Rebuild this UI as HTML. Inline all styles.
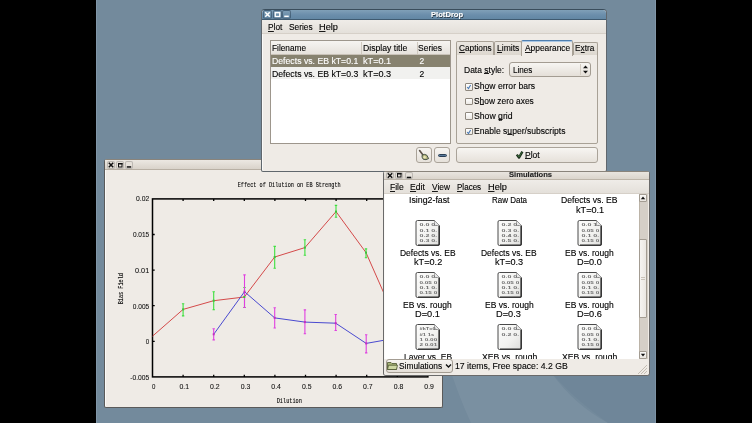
<!DOCTYPE html><html><head><meta charset="utf-8"><style>
html,body{margin:0;padding:0}
body{width:752px;height:423px;background:#000;position:relative;overflow:hidden;font-family:"Liberation Sans",sans-serif}
#root{position:absolute;left:0;top:0;width:752px;height:423px;will-change:transform}
.t{position:absolute;white-space:nowrap;line-height:12px;-webkit-text-stroke:0.12px currentColor}
.r{position:absolute;box-sizing:border-box}
u{text-decoration:none;background:linear-gradient(currentColor,currentColor) no-repeat;background-size:100% 0.9px;background-position:0 calc(100% - 0.6px)}
</style></head><body><div id="root">
<div class="r" style="left:96px;top:0px;width:560px;height:423px;background:#738a9c;box-shadow:inset 1px 0 0 #8196a8,inset -1px 0 0 #8196a8"></div>
<svg style="position:absolute;left:0;top:0" width="752" height="423"><path d="M447 360Q458 395 471 423H608Q575 405 553 375Q545 365 540 355Z" fill="#ffffff" opacity="0.055"/><path d="M540 355Q555 385 608 423H656V340Z" fill="#001030" opacity="0.03"/></svg><div class="r" style="left:104px;top:159px;width:339px;height:249px;background:#efebe6;border:1px solid #5a5a5a;border-top-color:#8a847b;border-radius:3px 3px 2px 2px;box-shadow:inset 1px 0 0 #fbfaf8"></div>
<div class="r" style="left:105px;top:160px;width:337px;height:10px;background:linear-gradient(#ece8e2,#d9d3ca);border-bottom:1px solid #b8b0a4"></div>
<div class="r" style="left:107px;top:161px;width:8px;height:8px;background:#e6e1da;border:1px solid rgba(0,0,0,0.18);border-radius:2px"></div>
<svg style="position:absolute;left:107px;top:161px" width="8" height="8"><path d="M1.7999999999999998 1.7999999999999998L6.2 6.2M6.2 1.7999999999999998L1.7999999999999998 6.2" stroke="#111" stroke-width="1.5"/></svg><div class="r" style="left:116px;top:161px;width:8px;height:8px;background:#e6e1da;border:1px solid rgba(0,0,0,0.18);border-radius:2px"></div>
<svg style="position:absolute;left:116px;top:161px" width="8" height="8"><rect x="2.5" y="2.5" width="3.5" height="3.5" fill="none" stroke="#111" stroke-width="1"/><rect x="2" y="2" width="4.5" height="1.5" fill="#111"/></svg><div class="r" style="left:125px;top:161px;width:8px;height:8px;background:#e6e1da;border:1px solid rgba(0,0,0,0.18);border-radius:2px"></div>
<svg style="position:absolute;left:125px;top:161px" width="8" height="8"><rect x="1.7999999999999998" y="5.2" width="4.4" height="1.5" fill="#111"/></svg><svg style="position:absolute;left:0;top:0" width="752" height="423" viewBox="0 0 752 423"><g font-family="Liberation Sans" font-size="7" fill="#111" stroke="#111" stroke-width="0.08"><rect x="152.5" y="198.9" width="275.40000000000003" height="178.00000000000003" fill="none" stroke="#000" stroke-width="1.5"/><path d="M183.1 198.9v2.2M183.1 376.9v-2.2M213.7 198.9v2.2M213.7 376.9v-2.2M244.3 198.9v2.2M244.3 376.9v-2.2M274.9 198.9v2.2M274.9 376.9v-2.2M305.5 198.9v2.2M305.5 376.9v-2.2M336.1 198.9v2.2M336.1 376.9v-2.2M366.7 198.9v2.2M366.7 376.9v-2.2M397.3 198.9v2.2M397.3 376.9v-2.2M152.5 234.5h2.2M427.9 234.5h-2.2M152.5 270.1h2.2M427.9 270.1h-2.2M152.5 305.7h2.2M427.9 305.7h-2.2M152.5 341.3h2.2M427.9 341.3h-2.2" stroke="#000" stroke-width="1.3"/><text x="136.0" y="201.1" textLength="13.2" lengthAdjust="spacingAndGlyphs">0.02</text><text x="132.9" y="236.9" textLength="16.3" lengthAdjust="spacingAndGlyphs">0.015</text><text x="135.0" y="272.5" textLength="14.2" lengthAdjust="spacingAndGlyphs">0.01</text><text x="132.8" y="308.5" textLength="16.4" lengthAdjust="spacingAndGlyphs">0.005</text><text x="145.8" y="344.1" textLength="3.4" lengthAdjust="spacingAndGlyphs">0</text><text x="130.2" y="379.8" textLength="19.0" lengthAdjust="spacingAndGlyphs">-0.005</text><text x="152.0" y="389.3" textLength="3.4" lengthAdjust="spacingAndGlyphs">0</text><text x="179.5" y="389.3" textLength="9.6" lengthAdjust="spacingAndGlyphs">0.1</text><text x="210.1" y="389.3" textLength="9.6" lengthAdjust="spacingAndGlyphs">0.2</text><text x="240.7" y="389.3" textLength="9.6" lengthAdjust="spacingAndGlyphs">0.3</text><text x="271.3" y="389.3" textLength="9.6" lengthAdjust="spacingAndGlyphs">0.4</text><text x="301.9" y="389.3" textLength="9.6" lengthAdjust="spacingAndGlyphs">0.5</text><text x="332.5" y="389.3" textLength="9.6" lengthAdjust="spacingAndGlyphs">0.6</text><text x="363.1" y="389.3" textLength="9.6" lengthAdjust="spacingAndGlyphs">0.7</text><text x="393.7" y="389.3" textLength="9.6" lengthAdjust="spacingAndGlyphs">0.8</text><text x="424.3" y="389.3" textLength="9.6" lengthAdjust="spacingAndGlyphs">0.9</text><g font-family="Liberation Mono" font-size="7.6" fill="#000" stroke="#000" stroke-width="0.12"><text x="237.7" y="187.0" textLength="103" lengthAdjust="spacingAndGlyphs">Effect of Dilution on EB Strength</text><text x="276.7" y="402.7" textLength="25.2" lengthAdjust="spacingAndGlyphs">Dilution</text><text transform="translate(123.3,304.3) rotate(-90)" x="0" y="0" textLength="31.3" lengthAdjust="spacingAndGlyphs">Bias Field</text></g></g><polyline points="152.5,336.2 183.1,309.4 213.7,300.7 244.3,297.0 274.7,257.0 304.9,247.6 336.0,211.6 366.0,252.6 396.6,322.0 427.5,330.0" fill="none" stroke="#d44a4a" stroke-width="1"/><path d="M183.1 303.2V316.4M181.9 303.7h2.4M181.9 315.9h2.4M213.7 291.2V310.3M212.5 291.7h2.4M212.5 309.8h2.4M244.5 287.0V308.0M243.3 287.5h2.4M243.3 307.5h2.4M274.7 245.9V268.7M273.5 246.4h2.4M273.5 268.2h2.4M304.9 239.2V255.8M303.7 239.7h2.4M303.7 255.3h2.4M336.0 204.9V217.8M334.8 205.4h2.4M334.8 217.3h2.4M366.0 248.4V258.3M364.8 248.9h2.4M364.8 257.8h2.4" stroke="#3ee03e" stroke-width="1.1" fill="none"/><polyline points="213.7,334.3 244.5,291.7 274.7,317.9 304.9,322.1 335.7,323.2 366.2,343.4 396.8,338.0 427.5,335.0" fill="none" stroke="#4a4ad0" stroke-width="1"/><path d="M213.7 328.3V340.4M212.5 328.8h2.4M212.5 339.9h2.4M244.5 274.4V308.0M243.3 274.9h2.4M243.3 307.5h2.4M274.7 307.2V328.5M273.5 307.7h2.4M273.5 328.0h2.4M304.9 309.4V334.3M303.7 309.9h2.4M303.7 333.8h2.4M335.7 314.0V331.0M334.5 314.5h2.4M334.5 330.5h2.4M366.2 334.3V353.4M365.0 334.8h2.4M365.0 352.9h2.4" stroke="#e040e0" stroke-width="1.1" fill="none"/><g fill="#3ec03e"><rect x="182.1" y="308.4" width="2" height="2"/><rect x="212.7" y="299.7" width="2" height="2"/><rect x="243.3" y="296.0" width="2" height="2"/><rect x="273.7" y="256.0" width="2" height="2"/><rect x="303.9" y="246.6" width="2" height="2"/><rect x="335.0" y="210.6" width="2" height="2"/><rect x="365.0" y="251.6" width="2" height="2"/></g><g fill="#c030c0"><rect x="212.7" y="333.3" width="2" height="2"/><rect x="243.5" y="290.7" width="2" height="2"/><rect x="273.7" y="316.9" width="2" height="2"/><rect x="303.9" y="321.1" width="2" height="2"/><rect x="334.7" y="322.2" width="2" height="2"/><rect x="365.2" y="342.4" width="2" height="2"/></g></svg>
<div class="r" style="left:261px;top:9px;width:346px;height:163px;background:#efebe6;border:1px solid #60676d;border-top-color:#3a4d5c;border-radius:4px 4px 2px 2px;box-shadow:inset 1px 0 0 #fbfaf8"></div>
<div class="r" style="left:262px;top:10px;width:344px;height:10px;background:linear-gradient(#80a0b8,#6b8eab 55%,#6388a5);border-bottom:1px solid #3f5a70;border-radius:3px 3px 0 0"></div>
<div class="r" style="left:263px;top:10px;width:9px;height:9px;background:linear-gradient(#7d9db6,#5f84a1);border:1px solid rgba(30,50,70,0.45);border-radius:2px"></div>
<svg style="position:absolute;left:263px;top:10px" width="9" height="9"><path d="M2.25 2.25L6.75 6.75M6.75 2.25L2.25 6.75" stroke="#fff" stroke-width="1.5"/></svg><div class="r" style="left:273px;top:10px;width:9px;height:9px;background:linear-gradient(#7d9db6,#5f84a1);border:1px solid rgba(30,50,70,0.45);border-radius:2px"></div>
<svg style="position:absolute;left:273px;top:10px" width="9" height="9"><rect x="2.25" y="2.6999999999999997" width="4.5" height="3.78" fill="none" stroke="#fff" stroke-width="1.3"/></svg><div class="r" style="left:282px;top:10px;width:9px;height:9px;background:linear-gradient(#7d9db6,#5f84a1);border:1px solid rgba(30,50,70,0.45);border-radius:2px"></div>
<svg style="position:absolute;left:282px;top:10px" width="9" height="9"><rect x="2.25" y="5.58" width="4.5" height="1.5" fill="#fff"/></svg><div class="t" style="left:431.40px;top:9.14px;font-size:7.4px;color:#fff;font-weight:bold;transform:scaleX(1.0312);transform-origin:0 0;text-shadow:0.6px 0.6px 0 #2a3a48">PlotDrop</div>
<div class="r" style="left:262px;top:20px;width:344px;height:14px;background:linear-gradient(#efece8,#e4e0da);border-bottom:1px solid #d6d0c8"></div>
<div class="t" style="left:267.73px;top:21.05px;font-size:8.5px;color:#000;font-weight:normal;transform:scaleX(0.9786);transform-origin:0 0;"><u>P</u>lot</div>
<div class="t" style="left:288.92px;top:21.05px;font-size:8.5px;color:#000;font-weight:normal;transform:scaleX(0.9822);transform-origin:0 0;">Series</div>
<div class="t" style="left:319.46px;top:21.05px;font-size:8.5px;color:#000;font-weight:normal;transform:scaleX(1.0822);transform-origin:0 0;"><u>H</u>elp</div>
<div class="r" style="left:270px;top:40px;width:181px;height:104px;background:#fff;border:1px solid #9d968c"></div>
<div class="r" style="left:271px;top:41px;width:179px;height:14px;background:linear-gradient(#f6f4f1,#e6e2dc);border-bottom:1px solid #c9c2b8"></div>
<div class="r" style="left:361px;top:42px;width:1px;height:12px;background:#cfc8be"></div>
<div class="r" style="left:417px;top:42px;width:1px;height:12px;background:#cfc8be"></div>
<div class="t" style="left:271.94px;top:42.35px;font-size:8.5px;color:#000;font-weight:normal;transform:scaleX(0.9730);transform-origin:0 0;">Filename</div>
<div class="t" style="left:362.61px;top:42.35px;font-size:8.5px;color:#000;font-weight:normal;transform:scaleX(1.0185);transform-origin:0 0;">Display title</div>
<div class="t" style="left:418.42px;top:42.35px;font-size:8.5px;color:#000;font-weight:normal;transform:scaleX(0.9993);transform-origin:0 0;">Series</div>
<div class="r" style="left:271px;top:55px;width:179px;height:12px;background:#87826f"></div>
<div class="r" style="left:271px;top:67px;width:179px;height:12px;background:#f1f1ef"></div>
<div class="t" style="left:271.90px;top:55.45px;font-size:8.5px;color:#fff;font-weight:normal;transform:scaleX(1.0233);transform-origin:0 0;">Defects vs. EB kT=0.1</div>
<div class="t" style="left:363.01px;top:55.45px;font-size:8.5px;color:#fff;font-weight:normal;transform:scaleX(1.0756);transform-origin:0 0;">kT=0.1</div>
<div class="t" style="left:419.60px;top:55.45px;font-size:8.5px;color:#fff;font-weight:normal;">2</div>
<div class="t" style="left:271.90px;top:67.65px;font-size:8.5px;color:#000;font-weight:normal;transform:scaleX(1.0228);transform-origin:0 0;">Defects vs. EB kT=0.3</div>
<div class="t" style="left:363.01px;top:67.65px;font-size:8.5px;color:#000;font-weight:normal;transform:scaleX(1.0738);transform-origin:0 0;">kT=0.3</div>
<div class="t" style="left:419.60px;top:67.65px;font-size:8.5px;color:#000;font-weight:normal;">2</div>
<div class="r" style="left:416px;top:147px;width:16px;height:16px;background:linear-gradient(#f7f5f2,#e6e1da);border:1px solid #aaa399;border-radius:3px"></div>
<div class="r" style="left:434px;top:147px;width:16px;height:16px;background:linear-gradient(#f7f5f2,#e6e1da);border:1px solid #aaa399;border-radius:3px"></div>
<svg style="position:absolute;left:416px;top:147px" width="16" height="16"><path d="M3.6 3.6L7 8" stroke="#5e544c" stroke-width="1.7" stroke-linecap="round"/><path d="M6 8.3Q8.5 6.5 10.8 8.2L12.6 11.6Q10 13.4 7.2 12.2Q5.6 10.2 6 8.3Z" fill="#b9b883" stroke="#34443a" stroke-width="0.9"/><circle cx="8.6" cy="10.3" r="1.2" fill="#e8e6b8"/></svg><div class="r" style="left:438px;top:153.5px;width:8.5px;height:3.0px;background:#5a7a9a;border:0.8px solid #2a3f55;border-radius:1.5px"></div>
<div class="r" style="left:456px;top:54px;width:142px;height:90px;background:#efebe6;border:1px solid #a8a196;border-radius:0 0 2px 2px"></div>
<div class="r" style="left:456px;top:41px;width:38px;height:14px;background:linear-gradient(#ebe7e1,#dcd7cf);border:1px solid #a8a196;border-bottom:none;border-radius:2px 2px 0 0"></div>
<div class="r" style="left:494px;top:41px;width:28px;height:14px;background:linear-gradient(#ebe7e1,#dcd7cf);border:1px solid #a8a196;border-bottom:none;border-radius:2px 2px 0 0"></div>
<div class="r" style="left:573px;top:42px;width:25px;height:13px;background:linear-gradient(#ebe7e1,#dcd7cf);border:1px solid #a8a196;border-bottom:none;border-radius:2px 2px 0 0"></div>
<div class="r" style="left:521px;top:40px;width:52px;height:16px;background:#efebe6;border:1px solid #a8a196;border-bottom:none;border-top:1px solid #4f7fb0;box-shadow:inset 0 1px 0 #a9c6e3;border-radius:2px 2px 0 0"></div>
<div class="t" style="left:459.29px;top:42.05px;font-size:8.5px;color:#000;font-weight:normal;transform:scaleX(0.9723);transform-origin:0 0;"><u>C</u>aptions</div>
<div class="t" style="left:497.02px;top:42.05px;font-size:8.5px;color:#000;font-weight:normal;transform:scaleX(1.0044);transform-origin:0 0;"><u>L</u>imits</div>
<div class="t" style="left:524.80px;top:42.05px;font-size:8.5px;color:#000;font-weight:normal;transform:scaleX(0.9852);transform-origin:0 0;"><u>A</u>ppearance</div>
<div class="t" style="left:574.94px;top:42.35px;font-size:8.5px;color:#000;font-weight:normal;transform:scaleX(0.9704);transform-origin:0 0;">E<u>x</u>tra</div>
<div class="t" style="left:463.52px;top:63.75px;font-size:8.5px;color:#000;font-weight:normal;transform:scaleX(0.9995);transform-origin:0 0;">Data <u>s</u>tyle:</div>
<div class="r" style="left:509px;top:62px;width:82px;height:15px;background:linear-gradient(#f7f5f2,#e4dfd8);border:1px solid #a39c92;border-radius:3px"></div>
<div class="r" style="left:580px;top:64px;width:1px;height:11px;background:#d3ccc2"></div>
<div class="t" style="left:512.85px;top:63.75px;font-size:8.5px;color:#000;font-weight:normal;transform:scaleX(0.9567);transform-origin:0 0;">Lines</div>
<svg style="position:absolute;left:582px;top:64px" width="7" height="11"><path d="M1 4.2L3.5 1.5L6 4.2zM1 6.8L3.5 9.5L6 6.8z" fill="#111"/></svg><div class="r" style="left:465px;top:83px;width:7.5px;height:7.5px;background:linear-gradient(#fff,#ece9e4);border:1px solid #8f887e;border-radius:1px"></div>
<svg style="position:absolute;left:465px;top:83px" width="8" height="8"><path d="M2.2 4L3.5 5.6L5.6 2" stroke="#4a7ab5" stroke-width="1.1" fill="none"/></svg><div class="t" style="left:473.91px;top:80.35px;font-size:8.5px;color:#000;font-weight:normal;transform:scaleX(1.0101);transform-origin:0 0;">Sh<u>o</u>w error bars</div>
<div class="r" style="left:465px;top:97.6px;width:7.5px;height:7.5px;background:linear-gradient(#fff,#ece9e4);border:1px solid #8f887e;border-radius:1px"></div>
<div class="t" style="left:473.92px;top:94.95px;font-size:8.5px;color:#000;font-weight:normal;transform:scaleX(0.9883);transform-origin:0 0;">S<u>h</u>ow zero axes</div>
<div class="r" style="left:465px;top:112.2px;width:7.5px;height:7.5px;background:linear-gradient(#fff,#ece9e4);border:1px solid #8f887e;border-radius:1px"></div>
<div class="t" style="left:473.91px;top:109.55px;font-size:8.5px;color:#000;font-weight:normal;transform:scaleX(1.0192);transform-origin:0 0;">Show <u>g</u>rid</div>
<div class="r" style="left:465px;top:127.5px;width:7.5px;height:7.5px;background:linear-gradient(#fff,#ece9e4);border:1px solid #8f887e;border-radius:1px"></div>
<svg style="position:absolute;left:465px;top:127.5px" width="8" height="8"><path d="M2.2 4L3.5 5.6L5.6 2" stroke="#4a7ab5" stroke-width="1.1" fill="none"/></svg><div class="t" style="left:473.61px;top:124.85px;font-size:8.5px;color:#000;font-weight:normal;transform:scaleX(1.0082);transform-origin:0 0;">Enable s<u>u</u>per/subscripts</div>
<div class="r" style="left:456px;top:147px;width:142px;height:16px;background:linear-gradient(#f7f5f2,#e6e1da);border:1px solid #aaa399;border-radius:3px"></div>
<svg style="position:absolute;left:515px;top:150px" width="9" height="10"><path d="M1.8 4.6L4 7.6L7.4 1.6" stroke="#1c2e1c" stroke-width="2.4" fill="none" stroke-linejoin="round"/><path d="M2.4 4.9L4 7L6.9 2.2" stroke="#3f7a3f" stroke-width="0.8" fill="none"/></svg><div class="t" style="left:525.22px;top:148.55px;font-size:8.5px;color:#000;font-weight:normal;transform:scaleX(1.0002);transform-origin:0 0;"><u>P</u>lot</div>
<div class="r" style="left:383px;top:171px;width:267px;height:205px;background:#efebe6;border:1px solid #6a6a6a;border-top-color:#8a847b;border-radius:3px 3px 3px 3px;box-shadow:inset 1px 0 0 #fbfaf8"></div>
<div class="r" style="left:384px;top:172px;width:265px;height:8px;background:linear-gradient(#e9e5df,#dbd5cc);border-bottom:1px solid #bdb5a9"></div>
<div class="r" style="left:386px;top:172px;width:8px;height:7px;background:#e6e1da;border:1px solid rgba(0,0,0,0.18);border-radius:2px"></div>
<svg style="position:absolute;left:386px;top:172px" width="8" height="7"><path d="M1.7999999999999998 1.2999999999999998L6.2 5.7M6.2 1.2999999999999998L1.7999999999999998 5.7" stroke="#111" stroke-width="1.5"/></svg><div class="r" style="left:395px;top:172px;width:8px;height:7px;background:#e6e1da;border:1px solid rgba(0,0,0,0.18);border-radius:2px"></div>
<svg style="position:absolute;left:395px;top:172px" width="8" height="7"><rect x="2.5" y="1.5" width="3.5" height="3.5" fill="none" stroke="#111" stroke-width="1"/><rect x="2" y="1" width="4.5" height="1.5" fill="#111"/></svg><div class="r" style="left:405px;top:172px;width:8px;height:7px;background:#e6e1da;border:1px solid rgba(0,0,0,0.18);border-radius:2px"></div>
<svg style="position:absolute;left:405px;top:172px" width="8" height="7"><rect x="1.7999999999999998" y="4.7" width="4.4" height="1.5" fill="#111"/></svg><div class="t" style="left:508.97px;top:169.11px;font-size:7.2px;color:#222;font-weight:bold;transform:scaleX(1.0575);transform-origin:0 0;">Simulations</div>
<div class="r" style="left:384px;top:180px;width:265px;height:14px;background:linear-gradient(#efece8,#e4e0da);border-bottom:1px solid #d6d0c8"></div>
<div class="t" style="left:389.92px;top:181.05px;font-size:8.5px;color:#000;font-weight:normal;transform:scaleX(1.0028);transform-origin:0 0;"><u>F</u>ile</div>
<div class="t" style="left:409.91px;top:181.05px;font-size:8.5px;color:#000;font-weight:normal;transform:scaleX(1.0074);transform-origin:0 0;"><u>E</u>dit</div>
<div class="t" style="left:431.86px;top:181.05px;font-size:8.5px;color:#000;font-weight:normal;transform:scaleX(0.9818);transform-origin:0 0;"><u>V</u>iew</div>
<div class="t" style="left:457.36px;top:181.05px;font-size:8.5px;color:#000;font-weight:normal;transform:scaleX(0.9461);transform-origin:0 0;"><u>P</u>laces</div>
<div class="t" style="left:488.26px;top:181.05px;font-size:8.5px;color:#000;font-weight:normal;transform:scaleX(1.0822);transform-origin:0 0;"><u>H</u>elp</div>
<div class="r" style="left:385px;top:194px;width:254px;height:165px;background:#fff"></div>
<svg width="0" height="0" style="position:absolute"><defs><linearGradient id="ig" x1="0" y1="0" x2="1" y2="1"><stop offset="0" stop-color="#fdfdfc"/><stop offset="0.6" stop-color="#f1f1ef"/><stop offset="1" stop-color="#dcdcda"/></linearGradient></defs></svg><div class="t" style="left:408.71px;top:194.25px;font-size:8.5px;color:#000;font-weight:normal;transform:scaleX(1.0345);transform-origin:0 0;">Ising2-fast</div>
<div class="t" style="left:491.96px;top:194.25px;font-size:8.5px;color:#000;font-weight:normal;transform:scaleX(0.9390);transform-origin:0 0;">Raw Data</div>
<div class="t" style="left:560.91px;top:194.25px;font-size:8.5px;color:#000;font-weight:normal;transform:scaleX(1.0144);transform-origin:0 0;">Defects vs. EB</div>
<div class="t" style="left:576.21px;top:203.65px;font-size:8.5px;color:#000;font-weight:normal;transform:scaleX(1.0756);transform-origin:0 0;">kT=0.1</div>
<div class="r" style="left:574px;top:194px;width:30px;height:2px;background:#fff"></div>
<svg style="position:absolute;left:415.3px;top:219px" width="26" height="28"><path d="M2.5 1.5H19.5L24.5 6.5V25Q24.5 26.5 23 26.5H2.5Q1 26.5 1 25V3Q1 1.5 2.5 1.5Z" fill="url(#ig)" stroke="#4a4a4a" stroke-width="1"/><path d="M19.5 1.5V6.5H24.5" fill="#e8e8e8" stroke="#777" stroke-width="0.6"/><path d="M24 7V25.5Q24 26 23.5 26H3" stroke="#2a2a2a" stroke-width="1.2" fill="none"/><g font-family="Liberation Sans" font-weight="bold" font-size="3.8" fill="#6a6a6a"><text x="4.5" y="7.4" textLength="17.7" lengthAdjust="spacingAndGlyphs">0.0 0.</text><text x="4.5" y="12.6" textLength="17.7" lengthAdjust="spacingAndGlyphs">0.1 0.</text><text x="4.5" y="17.8" textLength="17.7" lengthAdjust="spacingAndGlyphs">0.2 0.</text><text x="4.5" y="23.0" textLength="17.7" lengthAdjust="spacingAndGlyphs">0.3 0.</text></g></svg><div class="t" style="left:399.92px;top:246.85px;font-size:8.5px;color:#000;font-weight:normal;transform:scaleX(0.9961);transform-origin:0 0;">Defects vs. EB</div>
<div class="t" style="left:413.60px;top:255.95px;font-size:8.5px;color:#000;font-weight:normal;transform:scaleX(1.0774);transform-origin:0 0;">kT=0.2</div>
<svg style="position:absolute;left:496.5px;top:219px" width="26" height="28"><path d="M2.5 1.5H19.5L24.5 6.5V25Q24.5 26.5 23 26.5H2.5Q1 26.5 1 25V3Q1 1.5 2.5 1.5Z" fill="url(#ig)" stroke="#4a4a4a" stroke-width="1"/><path d="M19.5 1.5V6.5H24.5" fill="#e8e8e8" stroke="#777" stroke-width="0.6"/><path d="M24 7V25.5Q24 26 23.5 26H3" stroke="#2a2a2a" stroke-width="1.2" fill="none"/><g font-family="Liberation Sans" font-weight="bold" font-size="3.8" fill="#6a6a6a"><text x="4.5" y="7.4" textLength="17.7" lengthAdjust="spacingAndGlyphs">0.2 0.</text><text x="4.5" y="12.6" textLength="17.7" lengthAdjust="spacingAndGlyphs">0.3 0.</text><text x="4.5" y="17.8" textLength="17.7" lengthAdjust="spacingAndGlyphs">0.4 0.</text><text x="4.5" y="23.0" textLength="17.7" lengthAdjust="spacingAndGlyphs">0.5 0.</text></g></svg><div class="t" style="left:481.12px;top:246.85px;font-size:8.5px;color:#000;font-weight:normal;transform:scaleX(0.9961);transform-origin:0 0;">Defects vs. EB</div>
<div class="t" style="left:494.81px;top:255.95px;font-size:8.5px;color:#000;font-weight:normal;transform:scaleX(1.0738);transform-origin:0 0;">kT=0.3</div>
<svg style="position:absolute;left:577.0px;top:219px" width="26" height="28"><path d="M2.5 1.5H19.5L24.5 6.5V25Q24.5 26.5 23 26.5H2.5Q1 26.5 1 25V3Q1 1.5 2.5 1.5Z" fill="url(#ig)" stroke="#4a4a4a" stroke-width="1"/><path d="M19.5 1.5V6.5H24.5" fill="#e8e8e8" stroke="#777" stroke-width="0.6"/><path d="M24 7V25.5Q24 26 23.5 26H3" stroke="#2a2a2a" stroke-width="1.2" fill="none"/><g font-family="Liberation Sans" font-weight="bold" font-size="3.8" fill="#6a6a6a"><text x="4.5" y="7.4" textLength="17.7" lengthAdjust="spacingAndGlyphs">0.0 1.</text><text x="4.5" y="12.6" textLength="17.7" lengthAdjust="spacingAndGlyphs">0.05 0</text><text x="4.5" y="17.8" textLength="17.7" lengthAdjust="spacingAndGlyphs">0.1 0.</text><text x="4.5" y="23.0" textLength="17.7" lengthAdjust="spacingAndGlyphs">0.15 0</text></g></svg><div class="t" style="left:565.07px;top:246.85px;font-size:8.5px;color:#000;font-weight:normal;transform:scaleX(1.0006);transform-origin:0 0;">EB vs. rough</div>
<div class="t" style="left:576.92px;top:255.95px;font-size:8.5px;color:#000;font-weight:normal;transform:scaleX(1.0807);transform-origin:0 0;">D=0.0</div>
<svg style="position:absolute;left:415.3px;top:271px" width="26" height="28"><path d="M2.5 1.5H19.5L24.5 6.5V25Q24.5 26.5 23 26.5H2.5Q1 26.5 1 25V3Q1 1.5 2.5 1.5Z" fill="url(#ig)" stroke="#4a4a4a" stroke-width="1"/><path d="M19.5 1.5V6.5H24.5" fill="#e8e8e8" stroke="#777" stroke-width="0.6"/><path d="M24 7V25.5Q24 26 23.5 26H3" stroke="#2a2a2a" stroke-width="1.2" fill="none"/><g font-family="Liberation Sans" font-weight="bold" font-size="3.8" fill="#6a6a6a"><text x="4.5" y="7.4" textLength="17.7" lengthAdjust="spacingAndGlyphs">0.0 0.</text><text x="4.5" y="12.6" textLength="17.7" lengthAdjust="spacingAndGlyphs">0.05 0</text><text x="4.5" y="17.8" textLength="17.7" lengthAdjust="spacingAndGlyphs">0.1 0.</text><text x="4.5" y="23.0" textLength="17.7" lengthAdjust="spacingAndGlyphs">0.15 0</text></g></svg><div class="t" style="left:403.37px;top:298.85px;font-size:8.5px;color:#000;font-weight:normal;transform:scaleX(1.0006);transform-origin:0 0;">EB vs. rough</div>
<div class="t" style="left:415.21px;top:307.95px;font-size:8.5px;color:#000;font-weight:normal;transform:scaleX(1.0849);transform-origin:0 0;">D=0.1</div>
<svg style="position:absolute;left:496.5px;top:271px" width="26" height="28"><path d="M2.5 1.5H19.5L24.5 6.5V25Q24.5 26.5 23 26.5H2.5Q1 26.5 1 25V3Q1 1.5 2.5 1.5Z" fill="url(#ig)" stroke="#4a4a4a" stroke-width="1"/><path d="M19.5 1.5V6.5H24.5" fill="#e8e8e8" stroke="#777" stroke-width="0.6"/><path d="M24 7V25.5Q24 26 23.5 26H3" stroke="#2a2a2a" stroke-width="1.2" fill="none"/><g font-family="Liberation Sans" font-weight="bold" font-size="3.8" fill="#6a6a6a"><text x="4.5" y="7.4" textLength="17.7" lengthAdjust="spacingAndGlyphs">0.0 0.</text><text x="4.5" y="12.6" textLength="17.7" lengthAdjust="spacingAndGlyphs">0.05 0</text><text x="4.5" y="17.8" textLength="17.7" lengthAdjust="spacingAndGlyphs">0.1 0.</text><text x="4.5" y="23.0" textLength="17.7" lengthAdjust="spacingAndGlyphs">0.15 0</text></g></svg><div class="t" style="left:484.57px;top:298.85px;font-size:8.5px;color:#000;font-weight:normal;transform:scaleX(1.0006);transform-origin:0 0;">EB vs. rough</div>
<div class="t" style="left:496.41px;top:307.95px;font-size:8.5px;color:#000;font-weight:normal;transform:scaleX(1.0828);transform-origin:0 0;">D=0.3</div>
<svg style="position:absolute;left:577.0px;top:271px" width="26" height="28"><path d="M2.5 1.5H19.5L24.5 6.5V25Q24.5 26.5 23 26.5H2.5Q1 26.5 1 25V3Q1 1.5 2.5 1.5Z" fill="url(#ig)" stroke="#4a4a4a" stroke-width="1"/><path d="M19.5 1.5V6.5H24.5" fill="#e8e8e8" stroke="#777" stroke-width="0.6"/><path d="M24 7V25.5Q24 26 23.5 26H3" stroke="#2a2a2a" stroke-width="1.2" fill="none"/><g font-family="Liberation Sans" font-weight="bold" font-size="3.8" fill="#6a6a6a"><text x="4.5" y="7.4" textLength="17.7" lengthAdjust="spacingAndGlyphs">0.0 0.</text><text x="4.5" y="12.6" textLength="17.7" lengthAdjust="spacingAndGlyphs">0.05 0</text><text x="4.5" y="17.8" textLength="17.7" lengthAdjust="spacingAndGlyphs">0.1 0.</text><text x="4.5" y="23.0" textLength="17.7" lengthAdjust="spacingAndGlyphs">0.15 0</text></g></svg><div class="t" style="left:565.07px;top:298.85px;font-size:8.5px;color:#000;font-weight:normal;transform:scaleX(1.0006);transform-origin:0 0;">EB vs. rough</div>
<div class="t" style="left:576.91px;top:307.95px;font-size:8.5px;color:#000;font-weight:normal;transform:scaleX(1.0828);transform-origin:0 0;">D=0.6</div>
<svg style="position:absolute;left:415.3px;top:323px" width="26" height="28"><path d="M2.5 1.5H19.5L24.5 6.5V25Q24.5 26.5 23 26.5H2.5Q1 26.5 1 25V3Q1 1.5 2.5 1.5Z" fill="url(#ig)" stroke="#4a4a4a" stroke-width="1"/><path d="M19.5 1.5V6.5H24.5" fill="#e8e8e8" stroke="#777" stroke-width="0.6"/><path d="M24 7V25.5Q24 26 23.5 26H3" stroke="#2a2a2a" stroke-width="1.2" fill="none"/><g font-family="Liberation Sans" font-weight="bold" font-size="3.8" fill="#6a6a6a"><text x="4.5" y="7.4" textLength="17.7" lengthAdjust="spacingAndGlyphs">#kT=0.</text><text x="4.5" y="12.6" textLength="14.8" lengthAdjust="spacingAndGlyphs">#1 1s</text><text x="4.5" y="17.8" textLength="17.7" lengthAdjust="spacingAndGlyphs">1 0.00</text><text x="4.5" y="23.0" textLength="17.7" lengthAdjust="spacingAndGlyphs">2 0.01</text></g></svg><div class="t" style="left:403.67px;top:350.85px;font-size:8.5px;color:#000;font-weight:normal;transform:scaleX(0.9969);transform-origin:0 0;">Layer vs. EB</div>
<svg style="position:absolute;left:496.5px;top:323px" width="26" height="28"><path d="M2.5 1.5H19.5L24.5 6.5V25Q24.5 26.5 23 26.5H2.5Q1 26.5 1 25V3Q1 1.5 2.5 1.5Z" fill="url(#ig)" stroke="#4a4a4a" stroke-width="1"/><path d="M19.5 1.5V6.5H24.5" fill="#e8e8e8" stroke="#777" stroke-width="0.6"/><path d="M24 7V25.5Q24 26 23.5 26H3" stroke="#2a2a2a" stroke-width="1.2" fill="none"/><g font-family="Liberation Sans" font-weight="bold" font-size="3.8" fill="#6a6a6a"><text x="4.5" y="7.4" textLength="17.7" lengthAdjust="spacingAndGlyphs">0.0 0.</text><text x="4.5" y="12.6" textLength="17.7" lengthAdjust="spacingAndGlyphs">0.2 0.</text></g></svg><div class="t" style="left:481.53px;top:350.85px;font-size:8.5px;color:#000;font-weight:normal;transform:scaleX(1.0169);transform-origin:0 0;">XEB vs. rough</div>
<svg style="position:absolute;left:577.0px;top:323px" width="26" height="28"><path d="M2.5 1.5H19.5L24.5 6.5V25Q24.5 26.5 23 26.5H2.5Q1 26.5 1 25V3Q1 1.5 2.5 1.5Z" fill="url(#ig)" stroke="#4a4a4a" stroke-width="1"/><path d="M19.5 1.5V6.5H24.5" fill="#e8e8e8" stroke="#777" stroke-width="0.6"/><path d="M24 7V25.5Q24 26 23.5 26H3" stroke="#2a2a2a" stroke-width="1.2" fill="none"/><g font-family="Liberation Sans" font-weight="bold" font-size="3.8" fill="#6a6a6a"><text x="4.5" y="7.4" textLength="17.7" lengthAdjust="spacingAndGlyphs">0.0 0.</text><text x="4.5" y="12.6" textLength="17.7" lengthAdjust="spacingAndGlyphs">0.05 0</text><text x="4.5" y="17.8" textLength="17.7" lengthAdjust="spacingAndGlyphs">0.1 0.</text><text x="4.5" y="23.0" textLength="17.7" lengthAdjust="spacingAndGlyphs">0.15 0</text></g></svg><div class="t" style="left:562.03px;top:350.85px;font-size:8.5px;color:#000;font-weight:normal;transform:scaleX(1.0169);transform-origin:0 0;">XEB vs. rough</div>
<div class="r" style="left:384px;top:359px;width:265px;height:16px;background:#efebe6;border-radius:0 0 2px 2px"></div>
<div class="r" style="left:639px;top:194px;width:9px;height:165px;background:#d5cfc7;border-left:1px solid #bcb4a8"></div>
<div class="r" style="left:639px;top:194px;width:8px;height:8px;background:linear-gradient(#fbfaf8,#e9e5df);border:1px solid #a39c92;border-radius:1px"></div>
<svg style="position:absolute;left:639px;top:194px" width="8" height="8"><path d="M1.8 5.2L4 2.6L6.2 5.2z" fill="#111"/></svg><div class="r" style="left:639px;top:351px;width:8px;height:8px;background:linear-gradient(#fbfaf8,#e9e5df);border:1px solid #a39c92;border-radius:1px"></div>
<svg style="position:absolute;left:639px;top:351px" width="8" height="8"><path d="M1.8 2.8L4 5.4L6.2 2.8z" fill="#111"/></svg><div class="r" style="left:639px;top:239px;width:8px;height:79px;background:linear-gradient(90deg,#f6f4f1,#ebe7e2);border:1px solid #a39c92;border-radius:1px"></div>
<div class="r" style="left:641px;top:277px;width:4px;height:1px;background:#c9c2b8"></div>
<div class="r" style="left:641px;top:279px;width:4px;height:1px;background:#c9c2b8"></div>
<div class="r" style="left:386px;top:359px;width:67px;height:14px;background:linear-gradient(#f7f5f2,#e4dfd8);border:1px solid #a39c92;border-radius:3px"></div>
<svg style="position:absolute;left:387px;top:361px" width="11" height="10"><path d="M0.5 1.5H4L5 2.5H9.5V8.5H0.5Z" fill="#a8b47a" stroke="#4d5530" stroke-width="0.8"/><path d="M1.5 4.2H10.5L9.5 8.5H0.5Z" fill="#cdd7a3" stroke="#4d5530" stroke-width="0.8"/></svg><div class="t" style="left:399.22px;top:359.55px;font-size:8.5px;color:#000;font-weight:normal;transform:scaleX(0.9823);transform-origin:0 0;">Simulations</div>
<svg style="position:absolute;left:445px;top:363px" width="7" height="6"><path d="M1 1.5L3.5 4L6 1.5" stroke="#111" stroke-width="1.4" fill="none"/></svg><div class="t" style="left:454.75px;top:359.55px;font-size:8.5px;color:#000;font-weight:normal;transform:scaleX(1.0194);transform-origin:0 0;">17 items, Free space: 4.2 GB</div>
<svg style="position:absolute;left:636px;top:363px" width="12" height="12"><path d="M11 2L2 11M11 5L5 11M11 8L8 11" stroke="#c4bdb3" stroke-width="1"/></svg></div></body></html>
